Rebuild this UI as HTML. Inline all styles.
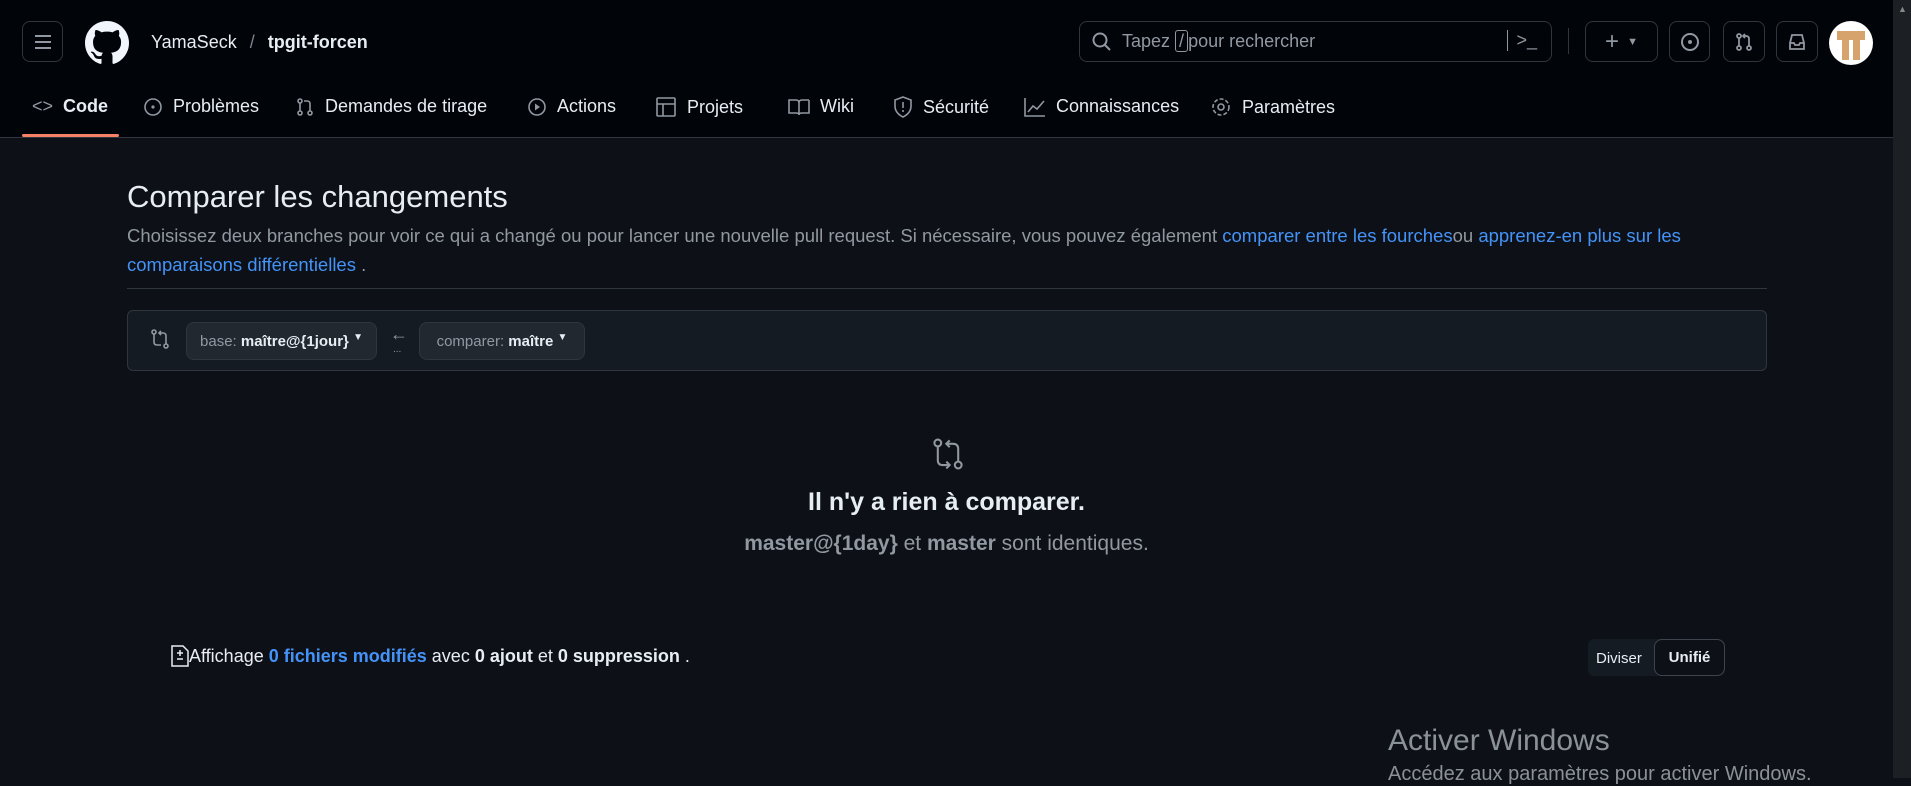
<!DOCTYPE html>
<html><head><meta charset="utf-8"><style>
*{box-sizing:border-box;margin:0;padding:0}
body{width:1911px;height:778px;overflow:hidden;background:#0d1117;font-family:"Liberation Sans",sans-serif;color:#e6edf3;position:relative}
.hdr{position:absolute;left:0;top:0;width:1893px;height:138px;background:#010409;border-bottom:1px solid #30363d}
.abs{position:absolute}
.btn{position:absolute;border:1px solid #30363d;border-radius:8px;display:flex;align-items:center;justify-content:center}
.tab{position:absolute;top:96px;font-size:18px;color:#e6edf3;display:flex;align-items:center;gap:10px}
svg{display:block}
.sb{position:absolute;right:0;top:0;width:18px;height:778px;background:#1c1f24}
a{color:#4493f8;text-decoration:none}
</style></head><body>
<div class="hdr">
 <div class="btn" style="left:22px;top:21px;width:41px;height:41px"><svg width="18" height="16"><path d="M1 2h16M1 8h16M1 14h16" stroke="#9198a1" stroke-width="2"/></svg></div>
 <svg class="abs" style="left:85px;top:21px" width="44" height="44" viewBox="0 0 16 16"><path fill="#f0f6fc" d="M8 0C3.58 0 0 3.58 0 8c0 3.54 2.29 6.530 5.47 7.59.4.07.55-.17.55-.38 0-.19-.01-.82-.01-1.49-2.01.37-2.530-.49-2.69-.94-.09-.23-.48-.94-.82-1.13-.28-.15-.68-.52-.01-.53.63-.01 1.08.58 1.23.82.72 1.21 1.87.87 2.33.66.07-.52.28-.87.51-1.07-1.78-.2-3.64-.89-3.64-3.95 0-.87.31-1.59.82-2.15-.08-.2-.36-1.02.08-2.12 0 0 .67-.21 2.2.82.64-.18 1.32-.27 2-.27.68 0 1.36.09 2 .27 1.53-1.04 2.2-.82 2.2-.82.44 1.1.16 1.92.08 2.12.51.56.82 1.27.82 2.15 0 3.07-1.87 3.75-3.65 3.95.29.25.54.73.54 1.48 0 1.07-.01 1.93-.01 2.2 0 .21.15.46.55.38A8.013 8.013 0 0016 8c0-4.42-3.58-8-8-8z"/></svg>
 <div class="abs" style="left:151px;top:32px;font-size:18px">YamaSeck <span style="color:#7d8590;margin:0 8px">/</span> <b>tpgit-forcen</b></div>
 <div class="btn" style="left:1079px;top:21px;width:473px;height:41px;justify-content:flex-start;padding-left:12px;gap:10px;color:#9198a1;font-size:18px">
  <svg width="20" height="20"><circle cx="8" cy="8" r="6.5" stroke="#9198a1" stroke-width="2" fill="none"/><path d="M13 13l5 5" stroke="#9198a1" stroke-width="2"/></svg>
  <span>Tapez <span style="border:1px solid #9198a1;border-radius:3px;padding:0 3px">/</span>pour rechercher</span>
  <span style="position:absolute;right:14px;top:8px;border-left:1px solid #9198a1;padding-left:8px">&gt;_</span>
 </div>
 <div class="abs" style="left:1568px;top:28px;width:1px;height:26px;background:#30363d"></div>
 <div class="btn" style="left:1585px;top:21px;width:73px;height:41px;color:#9198a1;font-size:24px">+ <span style="font-size:11px;margin-left:8px">▼</span></div>
 <div class="btn" style="left:1669px;top:21px;width:41px;height:41px"><svg width="20" height="20"><circle cx="10" cy="10" r="8" stroke="#9198a1" stroke-width="2" fill="none"/><circle cx="10" cy="10" r="2" fill="#9198a1"/></svg></div>
 <div class="btn" style="left:1723px;top:21px;width:42px;height:41px"><svg width="20" height="20" viewBox="0 0 20 20" fill="none" stroke="#9198a1" stroke-width="1.8"><circle cx="5" cy="4" r="2"/><circle cx="5" cy="16" r="2"/><circle cx="15" cy="16" r="2"/><path d="M5 6v8M15 14V7q0-3-3-3H9M11 2 9 4l2 2"/></svg></div>
 <div class="btn" style="left:1776px;top:21px;width:42px;height:41px"><svg width="20" height="20" fill="none" stroke="#9198a1" stroke-width="1.8"><path d="M3 11l2-8h10l2 8v6H3zM3 11h4l1 2h4l1-2h4"/></svg></div>
 <div class="abs" style="left:1829px;top:21px;width:44px;height:44px;border-radius:50%;background:#fff;overflow:hidden"><div class="abs" style="left:8px;top:10px;width:28px;height:9px;background:#d6a36c"></div><div class="abs" style="left:13px;top:19px;width:7px;height:20px;background:#d6a36c"></div><div class="abs" style="left:24px;top:19px;width:7px;height:20px;background:#d6a36c"></div></div>
 <div class="tab" style="left:32px"><span style="color:#9198a1">&lt;&gt;</span><b>Code</b></div>
 <div class="abs" style="left:22px;top:134px;width:97px;height:3px;background:#f78166;border-radius:2px"></div>
 <div class="tab" style="left:143px"><svg width="20" height="20"><circle cx="10" cy="10" r="8" stroke="#9198a1" stroke-width="1.6" fill="none"/><circle cx="10" cy="10" r="1.6" fill="#9198a1"/></svg>Problèmes</div>
 <div class="tab" style="left:295px"><svg width="20" height="20" fill="none" stroke="#9198a1" stroke-width="1.6"><circle cx="5" cy="4" r="2"/><circle cx="5" cy="16" r="2"/><circle cx="15" cy="16" r="2"/><path d="M5 6v8M15 14V7q0-3-3-3H9"/></svg>Demandes de tirage</div>
 <div class="tab" style="left:527px"><svg width="20" height="20"><circle cx="10" cy="10" r="8" stroke="#9198a1" stroke-width="1.6" fill="none"/><path d="M8 6.5v7l5-3.5z" fill="#9198a1"/></svg>Actions</div>
 <div class="tab" style="left:655px"><svg width="22" height="22" fill="none" stroke="#9198a1" stroke-width="1.6"><rect x="2" y="2" width="18" height="18" rx="1"/><path d="M2 8h18M8 8v12"/></svg>Projets</div>
 <div class="tab" style="left:788px"><svg width="22" height="20" fill="none" stroke="#9198a1" stroke-width="1.6"><path d="M1 3h7q3 0 3 3v12q0-2-3-2H1zM21 3h-7q-3 0-3 3M21 3v13h-7q-3 0-3 2"/></svg>Wiki</div>
 <div class="tab" style="left:893px"><svg width="20" height="22" fill="none" stroke="#9198a1" stroke-width="1.6"><path d="M10 1l8 3v6q0 7-8 11Q2 17 2 10V4z"/><path d="M10 6v6M10 14v2"/></svg>Sécurité</div>
 <div class="tab" style="left:1024px"><svg width="22" height="20" fill="none" stroke="#9198a1" stroke-width="1.6"><path d="M1 1v18h20M4 15l5-6 4 3 7-8"/></svg>Connaissances</div>
 <div class="tab" style="left:1210px"><svg width="22" height="22" fill="none" stroke="#9198a1" stroke-width="1.6"><circle cx="11" cy="11" r="3"/><circle cx="11" cy="11" r="8" stroke-dasharray="4 2"/></svg>Paramètres</div>
</div>
<div class="abs" style="left:127px;top:179px;font-size:31px">Comparer les changements</div>
<div class="abs" style="left:127px;top:221px;width:1600px;font-size:18.5px;line-height:29px;color:#9198a1">Choisissez deux branches pour voir ce qui a changé ou pour lancer une nouvelle pull request. Si nécessaire, vous pouvez également <a>comparer entre les fourches</a>ou <a>apprenez-en plus sur les comparaisons différentielles</a> .</div>
<div class="abs" style="left:127px;top:288px;width:1640px;height:1px;background:#30363d"></div>
<div class="abs" style="left:127px;top:310px;width:1640px;height:61px;background:#151b23;border:1px solid #30363d;border-radius:6px"></div>
<svg class="abs" style="left:150px;top:328px" width="20" height="22" fill="none" stroke="#9198a1" stroke-width="1.6"><circle cx="4" cy="4" r="2"/><circle cx="16" cy="18" r="2"/><path d="M4 6v8q0 3 3 3h4M16 16V8q0-3-3-3H9M11 3 9 5l2 2"/></svg>
<div class="btn" style="left:186px;top:322px;width:191px;height:38px;background:#212830;font-size:15px;color:#9198a1">base:&nbsp;<b style="color:#e6edf3">maître@{1jour}</b>&nbsp;<span style="font-size:10px;color:#e6edf3;position:relative;top:-4px">▼</span></div>
<div class="abs" style="left:390px;top:324px;color:#9198a1;font-size:18px">←</div>
<div class="abs" style="left:393px;top:344px;color:#9198a1;font-size:10px">...</div>
<div class="btn" style="left:419px;top:322px;width:166px;height:38px;background:#212830;font-size:15px;color:#9198a1">comparer:&nbsp;<b style="color:#e6edf3">maître</b>&nbsp;<span style="font-size:10px;color:#e6edf3;position:relative;top:-4px">▼</span></div>
<svg class="abs" style="left:931px;top:437px" width="34" height="34" viewBox="0 0 20 20" fill="none" stroke="#9198a1" stroke-width="1.2"><circle cx="4" cy="3.5" r="2"/><circle cx="16" cy="16.5" r="2"/><path d="M4 5.5v8q0 3 3 3h4M16 14.5V7q0-3-3-3H9M11 2 9 4l2 2M9 14.5l2 2-2 2"/></svg>
<div class="abs" style="left:0;width:1893px;top:488px;text-align:center;font-size:25px;font-weight:bold">Il n'y a rien à comparer.</div>
<div class="abs" style="left:0;width:1893px;top:532px;text-align:center;font-size:21px;color:#9198a1"><b>master@{1day}</b> et <b>master</b> sont identiques.</div>
<div class="abs" style="left:171px;top:645px;font-size:18px;display:flex;align-items:center"><svg width="18" height="22" fill="none" stroke="#e6edf3" stroke-width="1.5"><path d="M1 1h11l5 5v15H1z"/><path d="M9 5v6M6 8h6M6 14h6"/></svg>Affichage&nbsp;<a style="font-weight:bold">0 fichiers modifiés</a>&nbsp;avec&nbsp;<b>0 ajout</b>&nbsp;et&nbsp;<b>0 suppression</b>&nbsp;.</div>
<div class="abs" style="left:1588px;top:639px;width:137px;height:37px;background:#151b23;border-radius:6px"></div>
<div class="abs" style="left:1596px;top:650px;font-size:15px;color:#e6edf3">Diviser</div>
<div class="btn" style="left:1654px;top:639px;width:71px;height:37px;background:#0d1117;border-color:#3d444d;font-size:15px;font-weight:bold">Unifié</div>
<div class="abs" style="left:1388px;top:724px;font-size:30px;color:#8b9199">Activer Windows</div>
<div class="abs" style="left:1388px;top:763px;font-size:20px;color:#8b9199;white-space:nowrap">Accédez aux paramètres pour activer Windows.</div>
<div class="sb"><div class="abs" style="left:5px;top:4px;color:#888;font-size:9px">▲</div></div>
</body></html>
